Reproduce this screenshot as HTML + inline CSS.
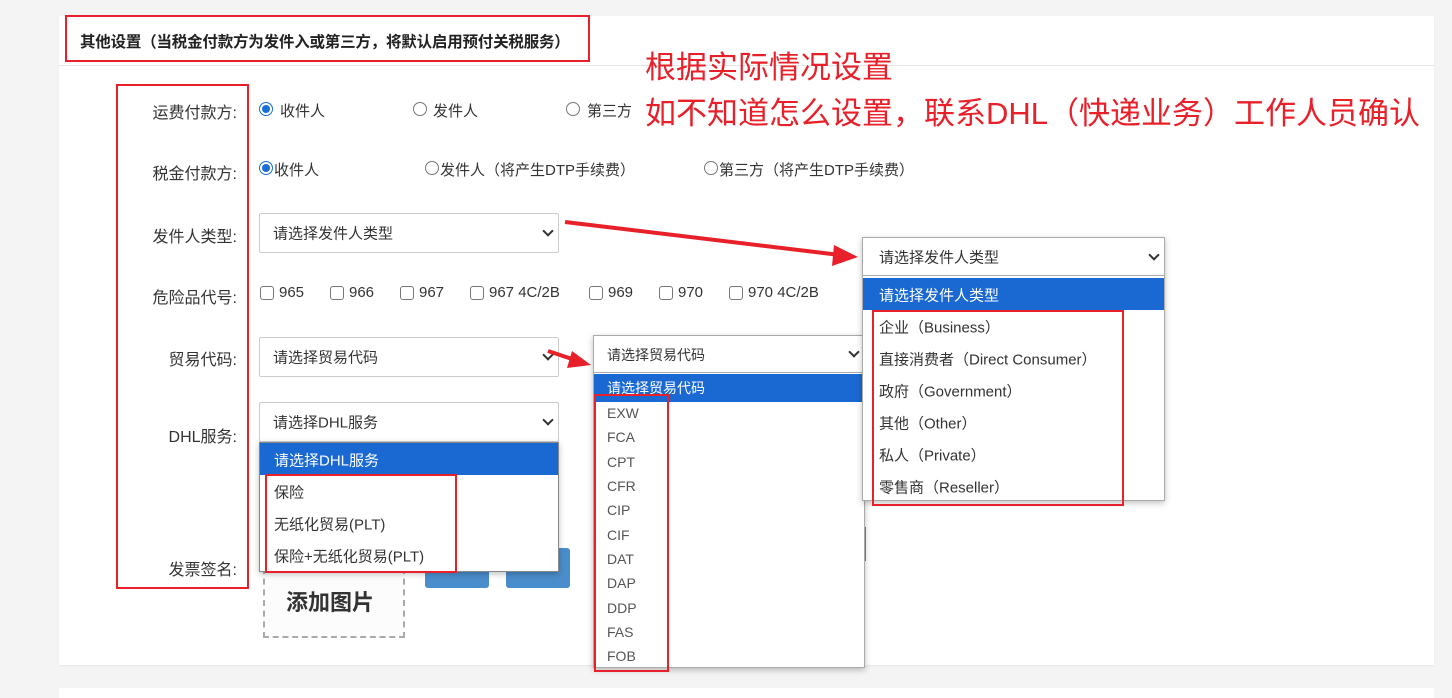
<!DOCTYPE html>
<html><head><meta charset="utf-8">
<style>
*{margin:0;padding:0;box-sizing:border-box}
body{width:1452px;height:695px;background:#f4f4f5;position:relative;overflow:hidden;font-family:"Liberation Sans","Noto Sans CJK SC",sans-serif;color:#333;font-size:15px}
.a{position:absolute;white-space:nowrap}
.card{position:absolute;left:59px;top:16px;width:1375px;height:649px;background:#fff;box-shadow:0 1px 2px rgba(0,0,0,.06)}
.rb{position:absolute;border:2px solid #e8202a}
.lab{position:absolute;right:1215px;white-space:nowrap;font-size:16px;color:#333;transform:translateY(-50%)}
.radio{position:absolute;width:14px;height:14px;border:1px solid #777;border-radius:50%;background:#fff}
.radio.on{border:1px solid #1a6fd6}
.radio.on::after{content:"";position:absolute;left:2px;top:2px;width:8px;height:8px;border-radius:50%;background:#1a6fd6}
.cb{position:absolute;width:14px;height:14px;border:1px solid #777;border-radius:3px;background:#fff}
.sel{position:absolute;background:#fff;border:1px solid #ccc;border-radius:2px}
.sel span{position:absolute;left:13px;top:50%;transform:translateY(-50%);font-size:15px;color:#333}
.chev{position:absolute;right:6px;top:50%;width:8px;height:8px;border-right:2px solid #333;border-bottom:2px solid #333;transform:translateY(-75%) rotate(45deg)}
.list{position:absolute;background:#fff;border:1px solid #888;box-shadow:0 2px 6px rgba(0,0,0,.25)}
.hl{position:absolute;left:0;right:0;background:#1a68d2;color:#fff}
.it{position:absolute;font-size:15px;color:#333;transform:translateY(-50%);white-space:nowrap}
.red{position:absolute;color:#e8202a;font-size:31px;white-space:nowrap;font-family:"Liberation Sans","Noto Sans CJK SC",sans-serif}
</style></head><body>
<div class="card"></div>
<div class="a" style="left:59px;top:65px;width:1375px;height:1px;background:#e6e6e6"></div>
<div style="position:absolute;left:59px;top:688px;width:1375px;height:10px;background:#fff"></div>

<div class="rb" style="left:65px;top:15px;width:525px;height:47px"></div>
<div class="a" style="left:80px;top:30px;font-size:15.5px;font-weight:bold;color:#222;letter-spacing:-0.2px">其他设置（当税金付款方为发件入或第三方，将默认启用预付关税服务）</div>

<div class="red" style="left:645px;top:42px">根据实际情况设置</div>
<div class="red" style="left:645px;top:88px">如不知道怎么设置，联系DHL（快递业务）工作人员确认</div>

<div class="rb" style="left:116px;top:84px;width:133px;height:505px"></div>
<div class="lab" style="top:111px">运费付款方:</div>
<div class="lab" style="top:172px">税金付款方:</div>
<div class="lab" style="top:235px">发件人类型:</div>
<div class="lab" style="top:296px">危险品代号:</div>
<div class="lab" style="top:358px">贸易代码:</div>
<div class="lab" style="top:435px">DHL服务:</div>
<div class="lab" style="top:568px">发票签名:</div>

<div class="radio on" style="left:259px;top:102px"></div><div class="a" style="left:280px;top:100px">收件人</div>
<div class="radio" style="left:413px;top:102px"></div><div class="a" style="left:433px;top:100px">发件人</div>
<div class="radio" style="left:566px;top:102px"></div><div class="a" style="left:587px;top:100px">第三方</div>
<div class="radio on" style="left:259px;top:161px"></div><div class="a" style="left:274px;top:159px">收件人</div>
<div class="radio" style="left:425px;top:161px"></div><div class="a" style="left:440px;top:159px">发件人（将产生DTP手续费）</div>
<div class="radio" style="left:704px;top:161px"></div><div class="a" style="left:719px;top:159px">第三方（将产生DTP手续费）</div>

<div class="sel" style="left:259px;top:213px;width:300px;height:40px"><span>请选择发件人类型</span><i class="chev"></i></div>

<div class="cb" style="left:260px;top:286px"></div><div class="a" style="left:279px;top:284px">965</div>
<div class="cb" style="left:330px;top:286px"></div><div class="a" style="left:349px;top:284px">966</div>
<div class="cb" style="left:400px;top:286px"></div><div class="a" style="left:419px;top:284px">967</div>
<div class="cb" style="left:470px;top:286px"></div><div class="a" style="left:489px;top:284px">967 4C/2B</div>
<div class="cb" style="left:589px;top:286px"></div><div class="a" style="left:608px;top:284px">969</div>
<div class="cb" style="left:659px;top:286px"></div><div class="a" style="left:678px;top:284px">970</div>
<div class="cb" style="left:729px;top:286px"></div><div class="a" style="left:748px;top:284px">970 4C/2B</div>

<div class="sel" style="left:259px;top:337px;width:300px;height:40px"><span>请选择贸易代码</span><i class="chev"></i></div>
<div class="sel" style="left:259px;top:402px;width:300px;height:40px"><span>请选择DHL服务</span><i class="chev"></i></div>

<div class="a" style="left:263px;top:568px;width:142px;height:70px;border:2px dashed #aaa;background:#fcfcfc"></div>
<div class="a" style="left:286px;top:585px;font-size:22px;font-weight:bold;color:#333">添加图片</div>
<div class="a" style="left:425px;top:548px;width:64px;height:40px;background:#4a8dcc;border-radius:3px"></div>
<div class="a" style="left:506px;top:548px;width:64px;height:40px;background:#4a8dcc;border-radius:3px"></div>
<div class="a" style="left:858px;top:527px;width:8px;height:34px;background:#4a8dcc"></div>

<div class="list" style="left:259px;top:442px;width:300px;height:130px">
 <div class="hl" style="top:0;height:32px"></div>
 <div class="it" style="left:14px;top:17px;color:#fff">请选择DHL服务</div>
 <div class="it" style="left:14px;top:49px">保险</div>
 <div class="it" style="left:14px;top:81px">无纸化贸易(PLT)</div>
 <div class="it" style="left:14px;top:113px">保险+无纸化贸易(PLT)</div>
</div>
<div class="rb" style="left:265px;top:474px;width:192px;height:99px"></div>

<div class="list" style="left:593px;top:335px;width:272px;height:333px;border-color:#aaa">
 <div style="position:absolute;left:0;right:0;top:0;height:37px;border-bottom:1px solid #aaa"><span class="it" style="left:13px;top:19px;font-size:14px">请选择贸易代码</span><i class="chev"></i></div>
 <div class="hl" style="top:38px;height:28px"></div>
 <div class="it" style="left:13px;top:52px;color:#fff;font-size:14px">请选择贸易代码</div>
 <div class="it" style="left:13px;top:77px;font-size:14px;color:#555">EXW</div>
 <div class="it" style="left:13px;top:101px;font-size:14px;color:#555">FCA</div>
 <div class="it" style="left:13px;top:126px;font-size:14px;color:#555">CPT</div>
 <div class="it" style="left:13px;top:150px;font-size:14px;color:#555">CFR</div>
 <div class="it" style="left:13px;top:174px;font-size:14px;color:#555">CIP</div>
 <div class="it" style="left:13px;top:199px;font-size:14px;color:#555">CIF</div>
 <div class="it" style="left:13px;top:223px;font-size:14px;color:#555">DAT</div>
 <div class="it" style="left:13px;top:247px;font-size:14px;color:#555">DAP</div>
 <div class="it" style="left:13px;top:272px;font-size:14px;color:#555">DDP</div>
 <div class="it" style="left:13px;top:296px;font-size:14px;color:#555">FAS</div>
 <div class="it" style="left:13px;top:320px;font-size:14px;color:#555">FOB</div>
</div>
<div class="rb" style="left:594px;top:394px;width:75px;height:278px"></div>

<div class="list" style="left:862px;top:237px;width:303px;height:264px;border-color:#aaa">
 <div style="position:absolute;left:0;right:0;top:0;height:38px;border-bottom:1px solid #aaa"><span class="it" style="left:16px;top:19px">请选择发件人类型</span><i class="chev"></i></div>
 <div class="hl" style="top:40px;height:32px"></div>
 <div class="it" style="left:16px;top:57px;color:#fff">请选择发件人类型</div>
 <div class="it" style="left:16px;top:89px">企业（Business）</div>
 <div class="it" style="left:16px;top:121px">直接消费者（Direct Consumer）</div>
 <div class="it" style="left:16px;top:153px">政府（Government）</div>
 <div class="it" style="left:16px;top:185px">其他（Other）</div>
 <div class="it" style="left:16px;top:217px">私人（Private）</div>
 <div class="it" style="left:16px;top:249px">零售商（Reseller）</div>
</div>
<div class="rb" style="left:872px;top:310px;width:252px;height:196px"></div>

<svg class="a" style="left:0;top:0" width="1452" height="695">
 <g fill="#e8202a" stroke="#e8202a">
  <line x1="565" y1="222" x2="840" y2="255" stroke-width="4"/>
  <polygon points="858,257 834,245 832,266" stroke="none"/>
  <line x1="548" y1="351" x2="575" y2="360" stroke-width="4"/>
  <polygon points="591,365 572,351 567,368" stroke="none"/>
 </g>
</svg>
</body></html>
